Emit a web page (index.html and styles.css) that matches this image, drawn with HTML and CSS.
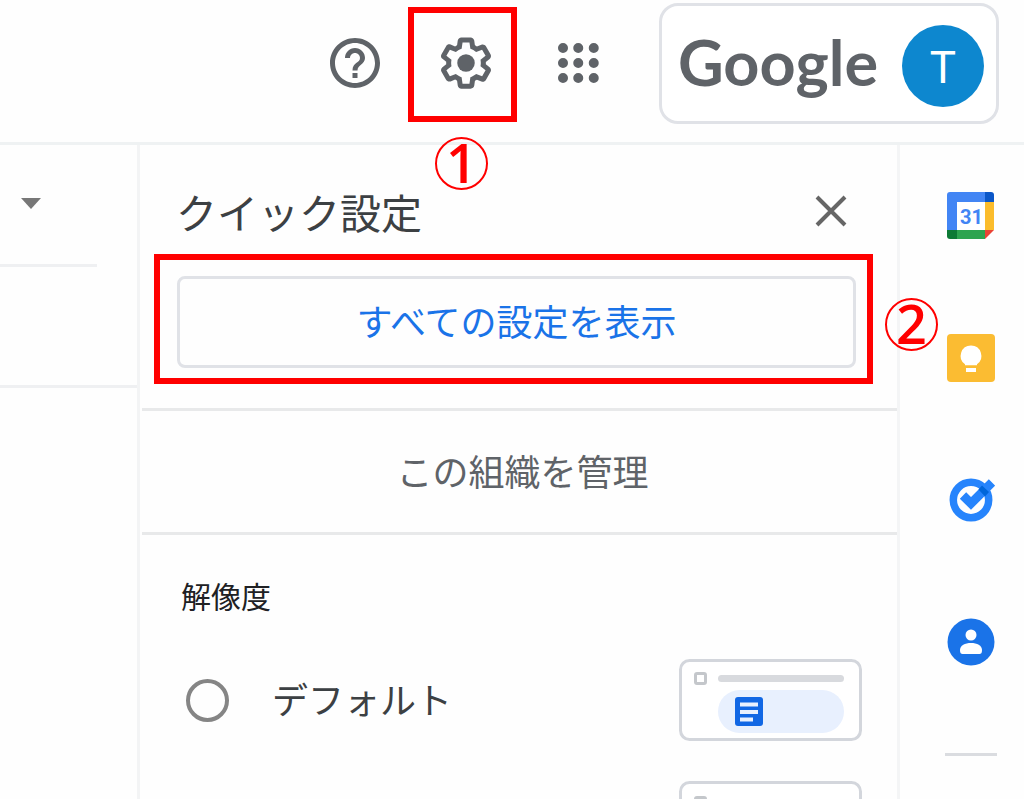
FILE: index.html
```html
<!DOCTYPE html>
<html lang="ja">
<head>
<meta charset="utf-8">
<meta name="viewport" content="width=device-width, initial-scale=1">
<title>クイック設定</title>
<link rel="stylesheet" href="styles.css">
</head>
<body>
<header class="topbar">
  <button class="icon-button help" type="button" aria-label="サポート">
    <svg viewBox="0 0 24 24" aria-hidden="true"><path d="M11 18h2v-2h-2v2zm1-16C6.480 2 2 6.480 2 12s4.480 10 10 10 10-4.480 10-10S17.520 2 12 2zm0 18c-4.410 0-8-3.590-8-8s3.590-8 8-8 8 3.590 8 8-3.590 8-8 8zm0-14c-2.210 0-4 1.790-4 4h2c0-1.100.9-2 2-2s2 .9 2 2c0 2-3 1.750-3 5h2c0-2.250 3-2.500 3-5 0-2.210-1.790-4-4-4z"/></svg>
  </button>
  <div class="callout callout-gear">
    <button class="icon-button" type="button" aria-label="設定">
      <svg viewBox="0 0 24 24" aria-hidden="true"><path d="M13.850 22.250h-3.700c-.74 0-1.360-.54-1.450-1.270l-.27-1.890c-.27-.14-.53-.29-.79-.46l-1.800.72c-.7.260-1.470-.03-1.810-.65L2.200 15.530c-.35-.66-.2-1.440.36-1.880l1.530-1.190c-.01-.15-.02-.3-.02-.46 0-.15.01-.31.02-.46l-1.520-1.190c-.59-.45-.74-1.260-.37-1.880l1.850-3.190c.34-.62 1.110-.9 1.790-.63l1.810.73c.26-.17.52-.32.78-.46l.27-1.910c.09-.7.71-1.250 1.440-1.250h3.700c.74 0 1.360.54 1.450 1.270l.27 1.890c.27.14.53.29.79.46l1.800-.72c.71-.26 1.480.03 1.820.65l1.840 3.180c.36.66.2 1.440-.36 1.880l-1.520 1.190c.01.15.02.3.02.46s-.01.31-.02.46l1.520 1.190c.56.45.72 1.230.37 1.860l-1.860 3.220c-.34.62-1.110.9-1.800.63l-1.800-.72c-.26.17-.52.32-.78.46l-.27 1.910c-.1.680-.72 1.220-1.460 1.220zm-3.230-2h2.760l.37-2.550.53-.22c.44-.18.88-.44 1.340-.78l.45-.34 2.380.96 1.380-2.400-2.030-1.580.07-.56c.03-.26.06-.51.06-.78s-.03-.53-.06-.78l-.07-.56 2.030-1.580-1.390-2.400-2.390.96-.45-.35c-.42-.32-.87-.58-1.330-.77l-.52-.22-.37-2.550h-2.760l-.37 2.550-.53.21c-.44.19-.88.44-1.340.79l-.45.33-2.380-.95-1.390 2.390 2.030 1.580-.07.56a7 7 0 0 0-.06.79c0 .26.02.53.06.78l.07.56-2.030 1.580 1.380 2.400 2.390-.96.45.35c.43.33.86.58 1.330.77l.53.22.38 2.550z"/><circle cx="12" cy="12" r="3.500"/></svg>
    </button>
    <span class="step step-one">1</span>
  </div>
  <button class="icon-button apps" type="button" aria-label="Google アプリ">
    <svg viewBox="0 0 24 24" aria-hidden="true"><path d="M4 6a2 2 0 1 0 4 0a2 2 0 1 0-4 0zm6.100 0a2 2 0 1 0 4 0a2 2 0 1 0-4 0zm6.200 0a2 2 0 1 0 4 0a2 2 0 1 0-4 0zM4 12a2 2 0 1 0 4 0a2 2 0 1 0-4 0zm6.100 0a2 2 0 1 0 4 0a2 2 0 1 0-4 0zm6.200 0a2 2 0 1 0 4 0a2 2 0 1 0-4 0zM4 18a2 2 0 1 0 4 0a2 2 0 1 0-4 0zm6.100 0a2 2 0 1 0 4 0a2 2 0 1 0-4 0zm6.200 0a2 2 0 1 0 4 0a2 2 0 1 0-4 0z"/></svg>
  </button>
  <button class="account" type="button">
    <span class="wordmark">Google</span>
    <span class="avatar">T</span>
  </button>
</header>
<div class="workspace">
  <div class="mail-column">
    <div class="mail-tools">
      <button class="caret" type="button" aria-label="入力ツール"><svg viewBox="0 0 20 12" aria-hidden="true"><path d="M0 0h20L10 11z"/></svg></button>
    </div>
    <div class="mail-row"></div>
  </div>
  <main class="panel">
    <div class="panel-head">
      <h1 class="panel-title">クイック設定</h1>
      <button class="close" type="button" aria-label="閉じる"><svg viewBox="0 0 32 32" aria-hidden="true"><path d="M2 2l28 28M30 2L2 30"/></svg></button>
    </div>
    <div class="callout callout-all">
      <button class="all-settings" type="button">すべての設定を表示</button>
      <span class="step step-two">2</span>
    </div>
    <a class="manage" href="#">この組織を管理</a>
    <section class="density">
      <h2 class="density-title">解像度</h2>
      <div class="option">
        <input class="radio" type="radio" name="density" id="density-default">
        <label class="option-label" for="density-default">デフォルト</label>
        <svg class="preview" viewBox="0 0 183 82" aria-hidden="true">
          <rect class="preview-frame" x="1.500" y="1.500" width="180" height="79" rx="9"/>
          <rect class="preview-check" x="16.500" y="14.500" width="10" height="10" rx="1.500"/>
          <rect class="preview-bar" x="39" y="16" width="126" height="7" rx="3.500"/>
          <rect class="preview-chip" x="39" y="31" width="126" height="43" rx="21.500"/>
          <rect class="preview-doc" x="56" y="38" width="28" height="29" rx="3"/>
          <path class="preview-lines" d="M61 45.500h18M61 53h18M61 60.500h13"/>
        </svg>
      </div>
      <div class="option">
        <input class="radio" type="radio" name="density" aria-label="標準">
        <svg class="preview" viewBox="0 0 183 82" aria-hidden="true">
          <rect class="preview-frame" x="1.500" y="1.500" width="180" height="79" rx="9"/>
          <rect class="preview-check" x="16.500" y="16.500" width="10" height="10" rx="1.500"/>
        </svg>
      </div>
    </section>
  </main>
  <nav class="rail" aria-label="サイドパネル">
    <button class="rail-button" type="button" aria-label="カレンダー">
      <svg viewBox="0 0 48 48" aria-hidden="true">
        <path fill="#fff" d="M10 10h28v28H10z"/>
        <path fill="#4285f4" d="M3 0h35v10H10v28H0V3a3 3 0 0 1 3-3z"/>
        <path fill="#0b57c8" d="M38 0h6a3 3 0 0 1 3 3v7h-9z"/>
        <path fill="#fbbc2c" d="M38 10h9v28h-9z"/>
        <path fill="#2da44f" d="M10 38h28v9H10z"/>
        <path fill="#0d7a35" d="M0 38h10v9H3a3 3 0 0 1-3-3z"/>
        <path fill="#ea4335" d="M38 38h9l-9 9z"/>
        <text class="calendar-day" x="24.500" y="32" text-anchor="middle">31</text>
      </svg>
    </button>
    <button class="rail-button" type="button" aria-label="Keep">
      <svg viewBox="0 0 48 48" aria-hidden="true"><rect width="48" height="48" rx="4" fill="#fbbc32"/><path fill="#fff" d="M24 11.500a10.300 10.300 0 0 0-6 18.700v1h12v-1a10.300 10.300 0 0 0-6-18.700zM19 34h10v4H19z"/></svg>
    </button>
    <button class="rail-button" type="button" aria-label="ToDo リスト">
      <svg viewBox="0 0 48 48" aria-hidden="true"><circle cx="24" cy="24" r="17.700" fill="none" stroke="#2684fc" stroke-width="7.500"/><path fill="none" stroke="#2684fc" stroke-width="9" d="M16 19.500l8 8L45 6.500"/><path fill="#0066da" d="M31.500 13.500l3.500-4 7 6.500-4 4.500z"/></svg>
    </button>
    <button class="rail-button" type="button" aria-label="連絡先">
      <svg viewBox="0 0 48 48" aria-hidden="true"><circle cx="24" cy="24" r="23.500" fill="#1a73e8"/><circle cx="24" cy="17" r="5.500" fill="#fff"/><path fill="#fff" d="M13 32c0-4.500 5-7 11-7s11 2.500 11 7c0 3-1 4-2.500 4h-17C14 36 13 35 13 32z"/></svg>
    </button>
    <hr class="rail-line">
  </nav>
</div>
</body>
</html>
```
FILE: styles.css
```css
* { box-sizing: border-box; }

body {
  margin: 0;
  height: 100vh;
  display: flex;
  flex-direction: column;
  overflow: hidden;
  background: #fefefe;
  color: #3c4043;
  font-family: "Noto Sans CJK JP", sans-serif;
}

button {
  margin: 0;
  padding: 0;
  border: 0;
  background: none;
  color: inherit;
  font: inherit;
}

svg { display: block; }

.topbar {
  flex: none;
  display: flex;
  align-items: flex-start;
  justify-content: flex-end;
  padding: 3px 25px 18px 0;
  border-bottom: 3px solid #eff2f3;
}

.icon-button { width: 60px; height: 60px; }
.icon-button svg { width: 60px; height: 60px; fill: #5f6368; }
.help { margin: 30px 23px 0 0; }
.apps { margin: 30px 51px 0 31px; }

.callout { position: relative; border: 6px solid #ff0000; }

.callout-gear {
  display: flex;
  justify-content: center;
  width: 109px;
  height: 115px;
  margin-top: 4px;
  padding: 20px 0 0 7px;
}

.step {
  position: absolute;
  display: flex;
  align-items: center;
  justify-content: center;
  width: 53px;
  height: 53px;
  padding-bottom: 4px;
  border: 2px solid #ff0000;
  border-radius: 50%;
  color: #ff0000;
  font: 600 54px/50px "Open Sans", sans-serif;
}

.step-one { left: 21px; top: 124px; }
.step-two { right: -71px; top: 38px; }

.account {
  display: flex;
  align-items: center;
  justify-content: space-between;
  width: 340px;
  height: 121px;
  padding: 4px 12px 0 16px;
  border: 3px solid #e0e2e7;
  border-radius: 19px;
  background: #ffffff;
}

.wordmark {
  padding-bottom: 8px;
  color: #5f6368;
  font: 700 63px/80px Lato, sans-serif;
}

.avatar {
  width: 82px;
  height: 82px;
  border-radius: 50%;
  background: #0d87cf;
  color: #ffffff;
  font: 400 44px/86px Roboto, sans-serif;
  text-align: center;
}

.workspace {
  flex: 1;
  min-height: 0;
  display: grid;
  grid-template-columns: 140px 1fr 127px;
}

.mail-column { border-right: 3px solid #f3f4f5; }

.mail-tools {
  width: 97px;
  height: 122px;
  padding: 53px 0 0 21px;
  border-bottom: 3px solid #eff0f2;
}

.caret { display: block; width: 20px; height: 12px; }
.caret svg { width: 20px; height: 12px; fill: #777777; }
.mail-row { height: 121px; border-bottom: 3px solid #eff0f2; }

.panel { min-width: 0; min-height: 0; }

.panel-head {
  display: flex;
  align-items: center;
  justify-content: space-between;
  height: 109px;
  padding: 22px 50px 0 36px;
}

.panel-title {
  margin: 0;
  font-size: 41px;
  font-weight: 400;
  line-height: 60px;
}

.close { width: 32px; height: 32px; }
.close svg { width: 32px; height: 32px; fill: none; stroke: #666666; stroke-width: 4; }

.callout-all {
  margin: 0 24px 24px 14px;
  padding: 16px 11px 10px 17px;
}

.all-settings {
  display: block;
  width: 100%;
  height: 92px;
  padding-bottom: 4px;
  border: 3px solid #e0e2e7;
  border-radius: 8px;
  color: #1a73e8;
  font-size: 36px;
  line-height: 54px;
}

.manage {
  display: block;
  margin-left: 2px;
  padding: 32px 0 35px 6px;
  border-top: 3px solid #e8e9ea;
  border-bottom: 3px solid #e8e9ea;
  color: #5f6368;
  font-size: 36px;
  line-height: 54px;
  text-align: center;
  text-decoration: none;
}

.density { padding: 38px 35px 0 41px; }

.density-title {
  margin: 0 0 42px;
  color: #202124;
  font-size: 30px;
  font-weight: 400;
  line-height: 44px;
}

.option {
  display: flex;
  align-items: center;
  height: 82px;
  margin-bottom: 40px;
}

.radio {
  flex: none;
  appearance: none;
  width: 43px;
  height: 43px;
  margin: 0 43px 0 5px;
  border: 4px solid #858585;
  border-radius: 50%;
}

.option-label { padding-bottom: 4px; font-size: 36px; line-height: 54px; }

.preview { flex: none; width: 183px; height: 82px; margin-left: auto; }
.preview-frame { fill: #ffffff; stroke: #d3d6dc; stroke-width: 3; }
.preview-check { fill: #ffffff; stroke: #c4c7cb; stroke-width: 3; }
.preview-bar { fill: #d8dade; }
.preview-chip { fill: #e8f0fe; }
.preview-doc { fill: #1167e4; }
.preview-lines { fill: none; stroke: #e8f0fe; stroke-width: 4; }

.rail {
  display: flex;
  flex-direction: column;
  align-items: center;
  gap: 94px;
  padding: 47px 0 0 17px;
  border-left: 3px solid #f4f5f6;
}

.rail-button { flex: none; width: 48px; height: 48px; }
.rail-button svg { width: 48px; height: 48px; }

.calendar-day {
  fill: #4285f4;
  font: 700 20px Roboto, sans-serif;
}

.rail-line {
  width: 52px;
  margin: -7px 0 0;
  border: 0;
  border-top: 3px solid #dadce0;
}
```
